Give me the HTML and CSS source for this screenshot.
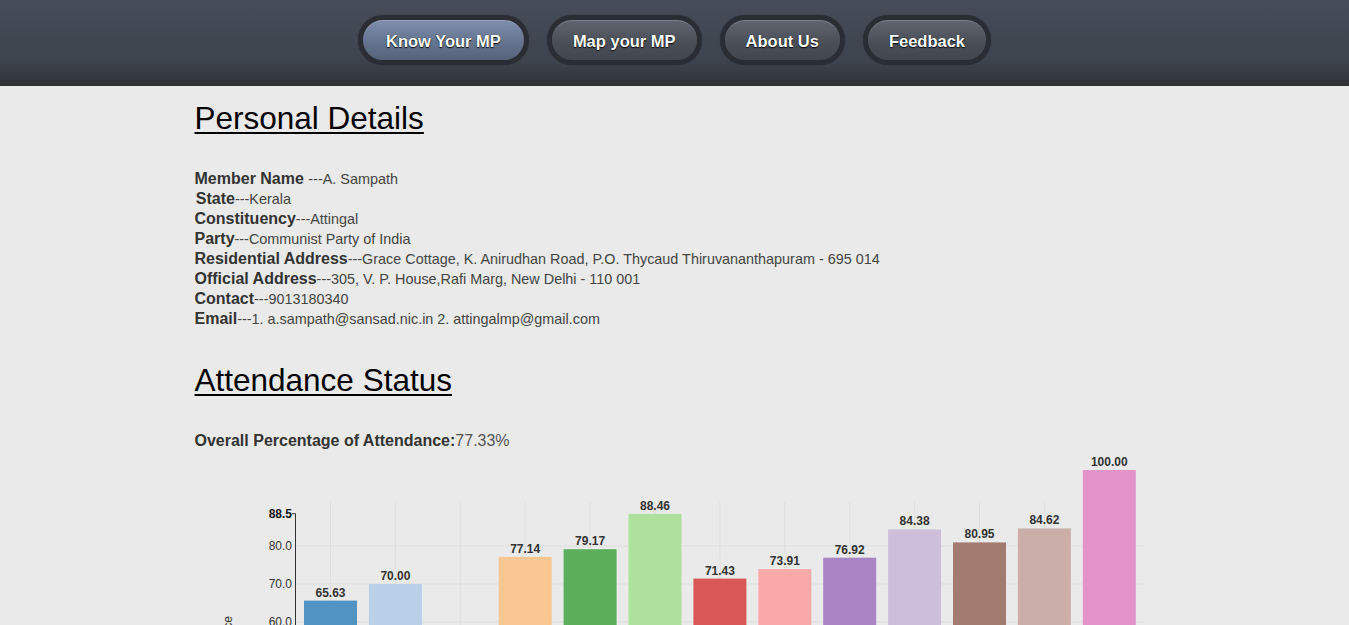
FILE: index.html
```html
<!DOCTYPE html>
<html>
<head>
<meta charset="utf-8">
<title>Know Your MP</title>
<link rel="stylesheet" href="styles.css">
</head>
<body>
<header class="topbar">
  <nav class="nav">
    <a class="nav-btn active" href="#">Know Your MP</a>
    <a class="nav-btn" href="#">Map your MP</a>
    <a class="nav-btn" href="#">About Us</a>
    <a class="nav-btn" href="#">Feedback</a>
  </nav>
</header>
<main class="container">
  <h1 class="section-title first">Personal Details</h1>
  <div class="details">
    <div class="row"><b class="label">Member Name</b> <span class="value">---A. Sampath</span></div>
    <div class="row"><b class="label">&#8202;State</b><span class="value">---Kerala</span></div>
    <div class="row"><b class="label">Constituency</b><span class="value">---Attingal</span></div>
    <div class="row"><b class="label">Party</b><span class="value">---Communist Party of India</span></div>
    <div class="row"><b class="label">Residential Address</b><span class="value">---Grace Cottage, K. Anirudhan Road, P.O. Thycaud Thiruvananthapuram - 695 014</span></div>
    <div class="row"><b class="label">Official Address</b><span class="value">---305, V. P. House,Rafi Marg, New Delhi - 110 001</span></div>
    <div class="row"><b class="label">Contact</b><span class="value">---9013180340</span></div>
    <div class="row"><b class="label">Email</b><span class="value">---1. a.sampath@sansad.nic.in 2. attingalmp@gmail.com</span></div>
  </div>
  <h1 class="section-title">Attendance Status</h1>
  <div class="overall"><b class="overall-label">Overall Percentage of Attendance:</b><span class="overall-value">77.33%</span></div>
  <svg class="chart" width="960" height="250" viewBox="0 0 960 250">
    <g class="grid">
      <line x1="100" y1="95" x2="949" y2="95"/>
      <line x1="100" y1="133" x2="949" y2="133"/>
      <line x1="100" y1="171" x2="949" y2="171"/>
      <line x1="135.5" y1="51" x2="135.5" y2="209"/>
      <line x1="200.4" y1="51" x2="200.4" y2="209"/>
      <line x1="265.3" y1="51" x2="265.3" y2="209"/>
      <line x1="330.2" y1="51" x2="330.2" y2="209"/>
      <line x1="395.1" y1="51" x2="395.1" y2="209"/>
      <line x1="460" y1="51" x2="460" y2="209"/>
      <line x1="524.9" y1="51" x2="524.9" y2="209"/>
      <line x1="589.8" y1="51" x2="589.8" y2="209"/>
      <line x1="654.7" y1="51" x2="654.7" y2="209"/>
      <line x1="719.6" y1="51" x2="719.6" y2="209"/>
      <line x1="784.5" y1="51" x2="784.5" y2="209"/>
      <line x1="849.4" y1="51" x2="849.4" y2="209"/>
      <line x1="914.3" y1="51" x2="914.3" y2="209"/>
    </g>
    <g class="bars">
      <rect x="109" y="149.6" width="53" height="59.4" fill="#5193c3"/>
      <rect x="173.9" y="133" width="53" height="76" fill="#bacfe8"/>
      <rect x="303.7" y="105.9" width="53" height="103.1" fill="#fac692"/>
      <rect x="368.6" y="98.2" width="53" height="110.8" fill="#5cb05c"/>
      <rect x="433.5" y="62.9" width="53" height="146.1" fill="#aee19e"/>
      <rect x="498.4" y="127.6" width="53" height="81.4" fill="#da5757"/>
      <rect x="563.3" y="118.1" width="53" height="90.9" fill="#f9aaa8"/>
      <rect x="628.2" y="106.7" width="53" height="102.3" fill="#a985c5"/>
      <rect x="693.1" y="78.4" width="53" height="130.6" fill="#cdbedb"/>
      <rect x="758" y="91.4" width="53" height="117.6" fill="#a47b71"/>
      <rect x="822.9" y="77.4" width="53" height="131.6" fill="#cbaea7"/>
      <rect x="887.8" y="19" width="53" height="190" fill="#e493c9"/>
    </g>
    <g class="bar-labels">
      <text x="135.5" y="145.6">65.63</text>
      <text x="200.4" y="129">70.00</text>
      <text x="330.2" y="101.9">77.14</text>
      <text x="395.1" y="94.2">79.17</text>
      <text x="460" y="58.9">88.46</text>
      <text x="524.9" y="123.6">71.43</text>
      <text x="589.8" y="114.1">73.91</text>
      <text x="654.7" y="102.7">76.92</text>
      <text x="719.6" y="74.4">84.38</text>
      <text x="784.5" y="87.4">80.95</text>
      <text x="849.4" y="73.4">84.62</text>
      <text x="914.3" y="15">100.00</text>
    </g>
    <g class="axis">
      <line class="axis-line" x1="100.5" y1="62.7" x2="100.5" y2="209"/>
      <line class="axis-line" x1="97" y1="62.7" x2="100.5" y2="62.7"/>
      <text class="tick top" x="97" y="67">88.5</text>
      <text class="tick" x="97" y="99">80.0</text>
      <text class="tick" x="97" y="137">70.0</text>
      <text class="tick" x="97" y="175">60.0</text>
      <text class="axis-title" x="-165" y="37" transform="rotate(-90)">Attendance</text>
    </g>
  </svg>
</main>
</body>
</html>
```

FILE: styles.css
```css
html, body {
  margin: 0;
  padding: 0;
}
body {
  background: #eaeaea;
  font-family: "Liberation Sans", Arial, sans-serif;
  color: #333;
}
.topbar {
  height: 80px;
  background: linear-gradient(#464d58, #3e444e 75%, #33373e);
  border-bottom: 6px solid #313236;
  display: flex;
  align-items: center;
  justify-content: center;
}
.nav {
  display: flex;
  gap: 18px;
  align-items: center;
}
.nav-btn {
  display: flex;
  align-items: center;
  box-sizing: border-box;
  height: 50px;
  padding: 2px 21px 0;
  border: 5px solid #2a2d33;
  border-radius: 26px;
  background: linear-gradient(#60656f, #484d56 60%, #41464f);
  box-shadow: inset 0 1px 0 rgba(255,255,255,0.18), 0 0 1px rgba(0,0,0,0.6);
  color: #fff;
  font-weight: bold;
  font-size: 16.5px;
  text-decoration: none;
  text-shadow: 0 1px 1px rgba(0,0,0,0.9), 0 0 1px rgba(0,0,0,0.6);
}
.nav-btn.active {
  padding: 2px 23px 0;
  background: linear-gradient(#7e8fad, #65748f 55%, #56637a);
}
.container {
  width: 960px;
  margin: 0 auto;
}
.section-title {
  margin: 33px 0;
  font-size: 31.5px;
  line-height: 36px;
  font-weight: normal;
  color: #000;
  text-decoration: underline;
  text-underline-offset: 3px;
  text-decoration-thickness: 2px;
}
.section-title.first {
  margin-top: 14px;
}
.details .row {
  line-height: 20px;
  height: 20px;
  white-space: nowrap;
}
.label {
  font-size: 16px;
  color: #333;
}
.value {
  font-size: 14.4px;
  color: #444;
}
.overall {
  line-height: 20px;
  font-size: 16px;
}
.overall-label {
  color: #333;
}
.overall-value {
  color: #555;
}
.chart {
  display: block;
  font-family: "Liberation Sans", Arial, sans-serif;
}
.grid line {
  stroke: #dfdfdf;
  stroke-width: 1;
}
.bar-labels text {
  font-size: 12px;
  font-weight: bold;
  fill: #333;
  text-anchor: middle;
}
.axis-line {
  stroke: #333;
  stroke-width: 1;
}
.tick {
  font-size: 12px;
  fill: #333;
  text-anchor: end;
}
.tick.top {
  font-weight: bold;
  fill: #111;
}
.axis-title {
  font-size: 12px;
  fill: #333;
  text-anchor: end;
}
```
